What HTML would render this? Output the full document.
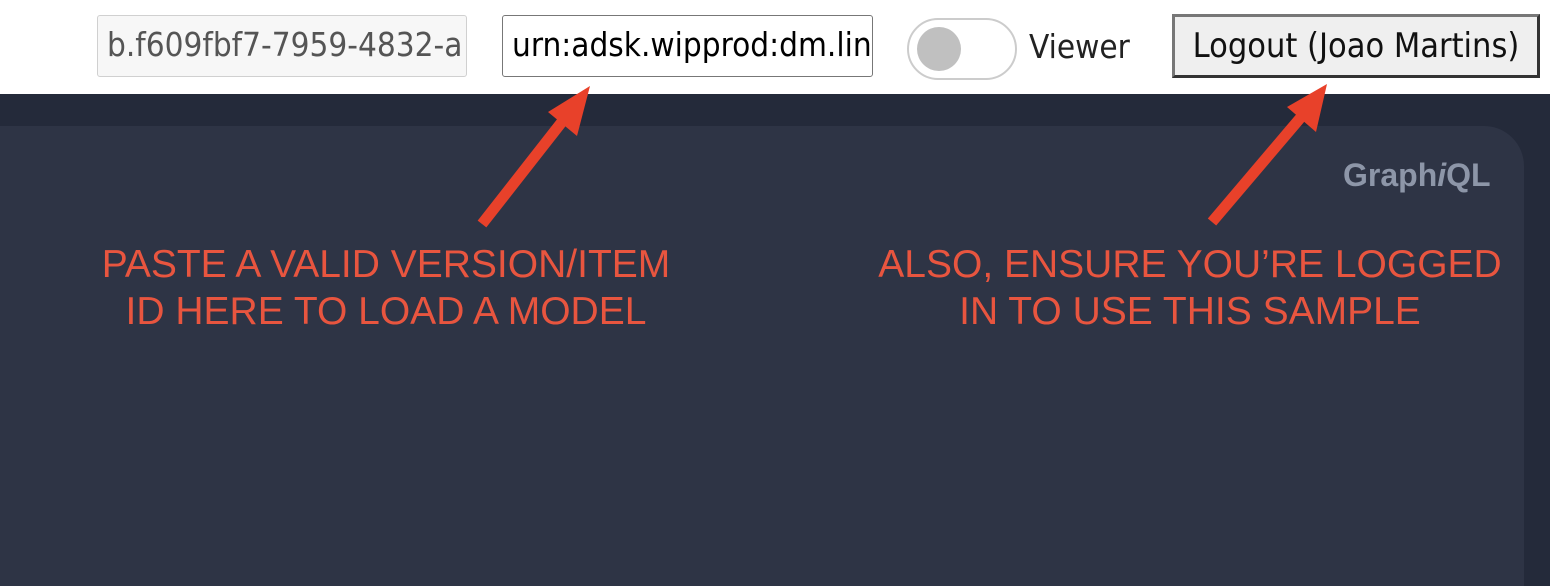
<!DOCTYPE html>
<html><head><style>
body{margin:0;width:1550px;height:570px;overflow:hidden;background:#242a3a;font-family:"DejaVu Sans Condensed","DejaVu Sans",sans-serif;position:relative}
.hdr{position:absolute;left:0;top:0;width:1550px;height:94px;background:#fff}
.in{position:absolute;top:15px;height:62px;box-sizing:border-box;border-radius:3px;font-size:33px;line-height:58px;padding-left:9px;overflow:hidden;white-space:nowrap}
.panel{position:absolute;left:0;top:126px;width:1524px;height:460px;background:#2e3445;border-top-right-radius:40px}
.t{position:absolute;color:#e8553f;font-family:"Liberation Sans",sans-serif;font-size:39px;text-align:center;line-height:47px;white-space:nowrap}
</style></head><body>
<div class="hdr">
<div class="in" style="left:97px;width:370px;background:#f7f7f7;border:1.5px solid #d0d0d0;color:#555">b.f609fbf7-7959-4832-a</div>
<div class="in" style="left:502px;width:371px;background:#fff;border:1.5px solid #777;color:#000">urn:adsk.wipprod:dm.lin</div>
<div style="position:absolute;left:907px;top:18px;width:110px;height:62px;box-sizing:border-box;border:2px solid #ccc;border-radius:31px"></div>
<div style="position:absolute;left:917px;top:27px;width:44px;height:44px;border-radius:50%;background:#c0c0c0"></div>
<div style="position:absolute;left:1029px;top:27px;font-size:33px;color:#222">Viewer</div>
<div style="position:absolute;left:1172px;top:14px;width:368px;height:64px;box-sizing:border-box;background:#efefef;border:3px solid;border-color:#777 #333 #333 #777;font-size:34px;line-height:58px;text-align:center;color:#111;white-space:nowrap">Logout (Joao Martins)</div>
</div>
<div class="panel"></div>
<div style="position:absolute;left:1343px;top:157px;font-family:'Liberation Sans',sans-serif;font-weight:bold;font-size:32px;color:#8d96a8">Graph<i>i</i>QL</div>
<svg width="1550" height="570" style="position:absolute;left:0;top:0">
<line x1="482" y1="224" x2="565" y2="118" stroke="#e8412a" stroke-width="11"/>
<polygon points="590,86 548,112 577,136" fill="#e8412a"/>
<line x1="1212" y1="222" x2="1302" y2="116" stroke="#e8412a" stroke-width="11"/>
<polygon points="1327,84 1287,107 1316,132" fill="#e8412a"/>
</svg>
<div class="t" style="left:86px;width:600px;top:241px">PASTE A VALID VERSION/ITEM<br>ID HERE TO LOAD A MODEL</div>
<div class="t" style="left:860px;width:660px;top:241px">ALSO, ENSURE YOU’RE LOGGED<br>IN TO USE THIS SAMPLE</div>
</body></html>
